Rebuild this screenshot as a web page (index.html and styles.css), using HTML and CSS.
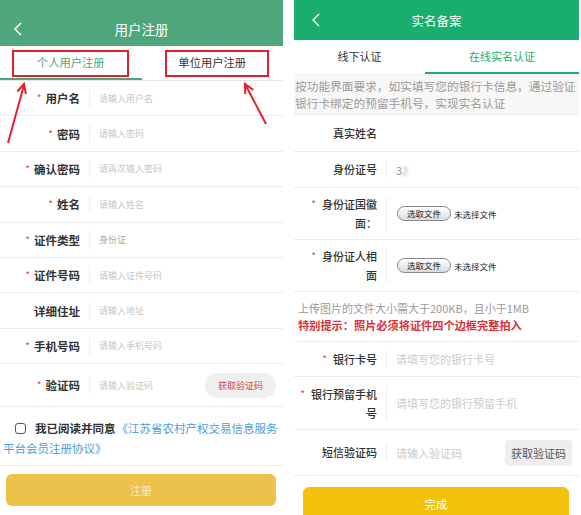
FILE: index.html
```html
<!DOCTYPE html>
<html lang="zh-CN">
<head>
    <meta charset="UTF-8">
    <meta name="viewport" content="width=device-width, initial-scale=1.0">
    <title>用户注册 / 实名备案</title>
    <link rel="stylesheet" href="styles.css">
</head>
<body>

    <div class="screens">

        <!-- 用户注册 -->
        <div class="phone reg">
            <div class="topbar">
                <svg class="back" width="12" height="16" viewBox="0 0 12 16"><polyline points="9,2 3,8 9,14" fill="none" stroke="#fff" stroke-width="1.6"/></svg>
                <span class="title">用户注册</span>
                <span></span>
            </div>

            <div class="tabs">
                <div class="tab active">个人用户注册</div>
                <div class="tab">单位用户注册</div>
            </div>

            <div class="row"><span class="lbl"><i>*</i>用户名</span><span class="sep"></span><span class="ph">请输入用户名</span></div>
            <div class="row"><span class="lbl"><i>*</i>密码</span><span class="sep"></span><span class="ph">请输入密码</span></div>
            <div class="row"><span class="lbl"><i>*</i>确认密码</span><span class="sep"></span><span class="ph">请再次输入密码</span></div>
            <div class="row"><span class="lbl"><i>*</i>姓名</span><span class="sep"></span><span class="ph">请输入姓名</span></div>
            <div class="row"><span class="lbl"><i>*</i>证件类型</span><span class="sep"></span><span class="ph dark">身份证</span></div>
            <div class="row"><span class="lbl"><i>*</i>证件号码</span><span class="sep"></span><span class="ph">请输入证件号码</span></div>
            <div class="row"><span class="lbl">详细住址</span><span class="sep"></span><span class="ph">请输入地址</span></div>
            <div class="row"><span class="lbl"><i>*</i>手机号码</span><span class="sep"></span><span class="ph">请输入手机号码</span></div>
            <div class="row code-row">
                <span class="lbl"><i>*</i>验证码</span><span class="sep"></span><span class="ph">请输入验证码</span>
                <button class="code-btn">获取验证码</button>
            </div>

            <p class="agree"><span class="box"></span><b>我已阅读并同意</b><a>《江苏省农村产权交易信息服务</a><br><a>平台会员注册协议》</a></p>

            <div class="foot">
                <button class="submit">注册</button>
            </div>

            <!-- 标注：两个入口 -->
            <svg class="marks" width="283" height="515" viewBox="0 0 283 515">
                <g fill="none" stroke="#e3202c" stroke-width="2">
                    <rect x="13" y="51" width="115" height="25"/>
                    <rect x="166" y="51" width="102" height="25"/>
                    <line x1="8" y1="143" x2="24" y2="85"/>
                    <polyline points="17.3,91.5 24,84 25.9,93.9"/>
                    <line x1="266" y1="124" x2="245.5" y2="85"/>
                    <polyline points="253.2,89.9 245,84 245.2,94.1"/>
                </g>
            </svg>
        </div>

        <!-- 实名备案 -->
        <div class="phone verify">
            <div class="topbar">
                <svg class="back" width="12" height="16" viewBox="0 0 12 16"><polyline points="9,2 3,8 9,14" fill="none" stroke="#fff" stroke-width="1.4"/></svg>
                <span class="title">实名备案</span>
                <span></span>
            </div>

            <div class="tabs">
                <div class="tab">线下认证</div>
                <div class="tab active">在线实名认证</div>
            </div>

            <p class="intro">按功能界面要求，如实填写您的银行卡信息，通过验证银行卡绑定的预留手机号，实现实名认证</p>

            <div class="vrow h37"><span class="lbl">真实姓名</span></div>
            <div class="vrow h36"><span class="lbl">身份证号</span><span class="sep"></span><span class="val">3<em>2</em></span></div>
            <div class="vrow h52">
                <span class="lbl"><i>*</i>身份证国徽<br>面：</span><span class="sep tall"></span>
                <button class="file-btn">选取文件</button><span class="file-none">未选择文件</span>
            </div>
            <div class="vrow h52">
                <span class="lbl"><i>*</i>身份证人相<br>面</span><span class="sep tall"></span>
                <button class="file-btn">选取文件</button><span class="file-none">未选择文件</span>
            </div>

            <div class="notice">
                <p>上传图片的文件大小需大于200KB，且小于1MB</p>
                <p class="warn">特别提示：照片必须将证件四个边框完整拍入</p>
            </div>

            <div class="vrow h35"><span class="lbl"><i>*</i>银行卡号</span><span class="sep"></span><span class="ph">请填写您的银行卡号</span></div>
            <div class="vrow h53"><span class="lbl"><i>*</i>银行预留手机<br>号</span><span class="sep tall"></span><span class="ph">请填写您的银行预留手机</span></div>
            <div class="vrow h46">
                <span class="lbl">短信验证码</span><span class="sep"></span><span class="ph">请输入验证码</span>
                <button class="sms-btn">获取验证码</button>
            </div>

            <div class="foot">
                <button class="submit">完成</button>
            </div>
        </div>

    </div>

</body>
</html>
```

FILE: styles.css
```css
body {
    margin: 0;
    background: #fff;
    font-family: "Noto Sans CJK SC", "Noto Sans", sans-serif;
    color: #333;
}
.screens {
    display: flex;
    gap: 11px;
    height: 515px;
    overflow: hidden;
}
.phone {
    position: relative;
    background: #fff;
}
.reg {
    width: 283px;
}
.verify {
    width: 285px;
}
p {
    margin: 0;
}
button {
    font-family: inherit;
    border: none;
    cursor: pointer;
}

/* 顶部导航 */
.topbar {
    display: grid;
    grid-template-columns: 40px 1fr 40px;
    align-items: center;
    color: #fff;
}
.reg .topbar {
    height: 34px;
    padding-top: 12px;
    background: #50a67b;
    font-size: 13.5px;
}
.verify .topbar {
    height: 40px;
    background: #19ad6e;
    font-size: 12.5px;
}
.topbar .title {
    text-align: center;
}
.reg .back {
    margin-left: 12px;
}
.verify .back {
    margin-left: 16px;
}

/* 选项卡 */
.tabs {
    display: grid;
    border-bottom: 1px solid #e6e6e6;
}
.reg .tabs {
    grid-template-columns: 1fr 1fr;
    height: 34px;
}
.verify .tabs {
    grid-template-columns: 131px 1fr;
    height: 34px;
    border-bottom-color: #eee;
}
.tab {
    display: flex;
    align-items: center;
    justify-content: center;
    font-size: 11.3px;
    color: #333;
    border-bottom: 2px solid transparent;
}
.reg .tab.active {
    color: #4ea57a;
    border-bottom-color: #4ea57a;
}
.verify .tab {
    font-size: 11px;
}
.verify .tab.active {
    color: #19ad6e;
    border-bottom-color: #19ad6e;
}

/* 注册表单 */
.row {
    display: flex;
    align-items: center;
    height: 34.4px;
    border-bottom: 1px solid #ececec;
}
.lbl {
    font-weight: bold;
    text-align: right;
    flex-shrink: 0;
}
.lbl i {
    font-style: normal;
    font-weight: normal;
    color: #c9555a;
    font-size: 10px;
    margin-right: 4px;
    vertical-align: 1px;
}
.row .lbl {
    width: 80px;
    font-size: 11.5px;
}
.sep {
    width: 1px;
    height: 18px;
    background: #eee;
    flex-shrink: 0;
}
.row .sep {
    margin: 0 9px;
}
.ph {
    font-size: 9px;
    color: #c6c6c6;
}
.ph.dark {
    color: #a9a9a9;
}
.code-row {
    height: 42px;
}
.code-btn {
    margin-left: auto;
    margin-right: 7px;
    width: 71px;
    height: 25px;
    border-radius: 13px;
    background: #efefef;
    color: #c84b52;
    font-size: 9px;
}

.agree {
    padding: 11px 3px 7px;
    font-size: 11.5px;
    line-height: 20px;
    border-bottom: 1px solid #ececec;
}
.agree .box {
    display: inline-block;
    width: 9px;
    height: 9px;
    border: 1px solid #555;
    border-radius: 3px;
    margin: 0 9px 0 12px;
    vertical-align: -1px;
}
.agree b {
    color: #333;
    margin-right: 1px;
}
.agree a {
    color: #4a9ed8;
}

.foot {
    padding: 8px 7px 0 6px;
}
.submit {
    display: block;
    width: 100%;
    height: 32px;
    border-radius: 6px;
    color: #fff;
    font-size: 11px;
}
.reg .submit {
    background: #ecc14c;
    color: #f7ecc8;
}

/* 实名备案 */
.intro {
    padding: 2px 2px 3px 1px;
    font-size: 11.7px;
    line-height: 17px;
    color: #9a9a9a;
    background: #f7f7f7;
    border-bottom: 1px solid #eaeaea;
}
.vrow {
    display: flex;
    align-items: center;
    border-bottom: 1px solid #ececec;
}
.vrow .lbl {
    width: 83px;
    font-size: 11px;
    font-weight: 500;
    line-height: 19px;
    color: #333;
}
.vrow .lbl i {
    margin-right: 6px;
}
.vrow .sep {
    margin: 0 9px;
    height: 17px;
}
.vrow .sep.tall {
    height: 34px;
}
.vrow .ph {
    font-size: 11px;
    color: #ccc;
}
.val {
    font-size: 11px;
    color: #999;
}
.val em {
    font-style: normal;
    filter: blur(1.5px);
}
.h35 { height: 34px; }
.h36 { height: 35px; }
.h37 { height: 36px; }
.h46 { height: 45px; }
.h52 { height: 51px; }
.h53 { height: 52px; }

.file-btn {
    height: 15px;
    padding: 0 9px;
    margin-left: 1px;
    border: 1px solid #888;
    border-radius: 8px;
    background: linear-gradient(#fff, #dcdcdc);
    color: #222;
    font-size: 8.5px;
    line-height: 13px;
}
.file-none {
    margin-left: 3px;
    font-size: 8.5px;
    color: #222;
}

.notice {
    padding: 8px 4px 7px;
    font-size: 11px;
    line-height: 17px;
    color: #9a9a9a;
    border-bottom: 1px solid #ececec;
}
.notice .warn {
    color: #d8323a;
    font-weight: bold;
    font-size: 11.2px;
}

.sms-btn {
    margin-left: auto;
    margin-right: 7px;
    width: 67px;
    height: 26px;
    border-radius: 4px;
    background: #eee;
    color: #555;
    font-size: 11px;
}
.verify .foot {
    padding: 11px 10px 0 9px;
}
.verify .submit {
    background: #f2c20b;
    height: 34px;
    font-size: 11.5px;
}

/* 标注层 */
.marks {
    position: absolute;
    top: 0;
    left: 0;
    pointer-events: none;
}
```
